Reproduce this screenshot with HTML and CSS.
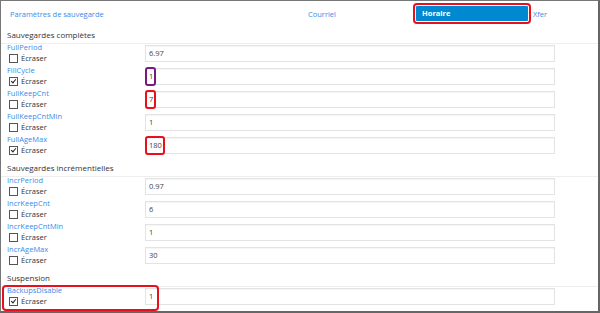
FILE: index.html
```html
<!DOCTYPE html>
<html lang="fr">
<head>
    <meta charset="UTF-8">
    <title>Paramètres de sauvegarde</title>
    <link rel="stylesheet" href="styles.css">
</head>
<body>
    <div class="frame">
        <nav class="tabs">
            <span class="tab tab-main">Paramètres de sauvegarde</span>
            <span class="tab tab-mail">Courriel</span>
            <span class="tab tab-active">Horaire</span>
            <span class="tab">Xfer</span>
        </nav>

        <div class="section">Sauvegardes complètes</div>
        <div class="row">
            <div class="label"><a>FullPeriod</a><span class="check"><i class="box"></i>Écraser</span></div>
            <div class="field">6.97</div>
        </div>
        <div class="row">
            <div class="label"><a>FillCycle</a><span class="check"><i class="box on"></i>Écraser</span></div>
            <div class="field"><span class="value mark purple">1</span></div>
        </div>
        <div class="row">
            <div class="label"><a>FullKeepCnt</a><span class="check"><i class="box"></i>Écraser</span></div>
            <div class="field"><span class="value mark">7</span></div>
        </div>
        <div class="row">
            <div class="label"><a>FullKeepCntMin</a><span class="check"><i class="box"></i>Écraser</span></div>
            <div class="field">1</div>
        </div>
        <div class="row">
            <div class="label"><a>FullAgeMax</a><span class="check"><i class="box on"></i>Écraser</span></div>
            <div class="field"><span class="value mark">180</span></div>
        </div>

        <div class="section">Sauvegardes incrémentielles</div>
        <div class="row">
            <div class="label"><a>IncrPeriod</a><span class="check"><i class="box"></i>Écraser</span></div>
            <div class="field">0.97</div>
        </div>
        <div class="row">
            <div class="label"><a>IncrKeepCnt</a><span class="check"><i class="box"></i>Écraser</span></div>
            <div class="field">6</div>
        </div>
        <div class="row">
            <div class="label"><a>IncrKeepCntMin</a><span class="check"><i class="box"></i>Écraser</span></div>
            <div class="field">1</div>
        </div>
        <div class="row">
            <div class="label"><a>IncrAgeMax</a><span class="check"><i class="box"></i>Écraser</span></div>
            <div class="field">30</div>
        </div>

        <div class="section">Suspension</div>
        <div class="row">
            <span class="row-mark"></span>
            <div class="label"><a>BackupsDisable</a><span class="check"><i class="box on"></i>Écraser</span></div>
            <div class="field">1</div>
        </div>
    </div>
</body>
</html>
```

FILE: styles.css
```css
body {
    margin: 0;
    font-family: "Open Sans", "Liberation Sans", sans-serif;
    background: #fff;
}
.frame {
    width: 600px;
    height: 313px;
    box-sizing: border-box;
    border-top: 1px solid #777;
    border-left: 1px solid #777;
    border-right: 2px solid #666;
    border-bottom: 2px solid #666;
    overflow: hidden;
}
.tabs {
    display: flex;
    align-items: center;
    height: 25px;
    font-size: 7.5px;
    color: #3b8be8;
}
.tab-main {
    width: 298px;
    padding-left: 9px;
}
.tab-mail {
    width: 108px;
}
.tab-active {
    width: 106px;
    height: 15px;
    line-height: 15px;
    padding-left: 6px;
    margin-right: 5px;
    background: #0089d0;
    color: #fff;
    font-weight: bold;
    border-radius: 1px;
    outline: 2px solid #e8101a;
    outline-offset: 1px;
    box-shadow: 0 0 0 1px #fff;
}
.section {
    height: 17px;
    line-height: 18px;
    padding-left: 6px;
    font-size: 8px;
    color: #333;
    border-bottom: 1px solid #eee;
}
.row {
    position: relative;
    display: grid;
    grid-template-columns: 138px 410px;
    height: 23px;
    padding-left: 6px;
}
.label {
    display: flex;
    flex-direction: column;
    font-size: 7.5px;
    line-height: 10px;
    margin-top: -2px;
}
.label a {
    color: #3b8be8;
}
.check {
    display: flex;
    align-items: center;
    color: #333;
    margin-top: 1px;
    padding-left: 2px;
}
.box {
    position: relative;
    width: 7px;
    height: 7px;
    border: 1px solid #555;
    margin-right: 3px;
    background: #fff;
}
.box.on::after {
    content: "";
    position: absolute;
    left: 2px;
    top: 0;
    width: 2px;
    height: 4px;
    border-right: 1.5px solid #222;
    border-bottom: 1.5px solid #222;
    transform: rotate(40deg);
}
.field {
    margin-top: 1px;
    height: 15px;
    line-height: 15px;
    padding-left: 3px;
    border: 1px solid #e3e3e3;
    box-shadow: inset 0 1px 1px rgba(0, 0, 0, 0.04);
    font-size: 7.5px;
    color: #444;
}
.value {
    display: inline-block;
}
.mark {
    position: relative;
}
.mark::after {
    content: "";
    position: absolute;
    left: -4px;
    right: -3px;
    top: -2px;
    bottom: -2px;
    border: 2px solid #e8101a;
    border-radius: 3px;
}
.mark.purple::after {
    border-color: #7a1a80;
}
.row-mark {
    position: absolute;
    left: 1px;
    top: -2px;
    width: 153px;
    height: 22px;
    border: 2px solid #e8101a;
    border-radius: 4px;
}
```
